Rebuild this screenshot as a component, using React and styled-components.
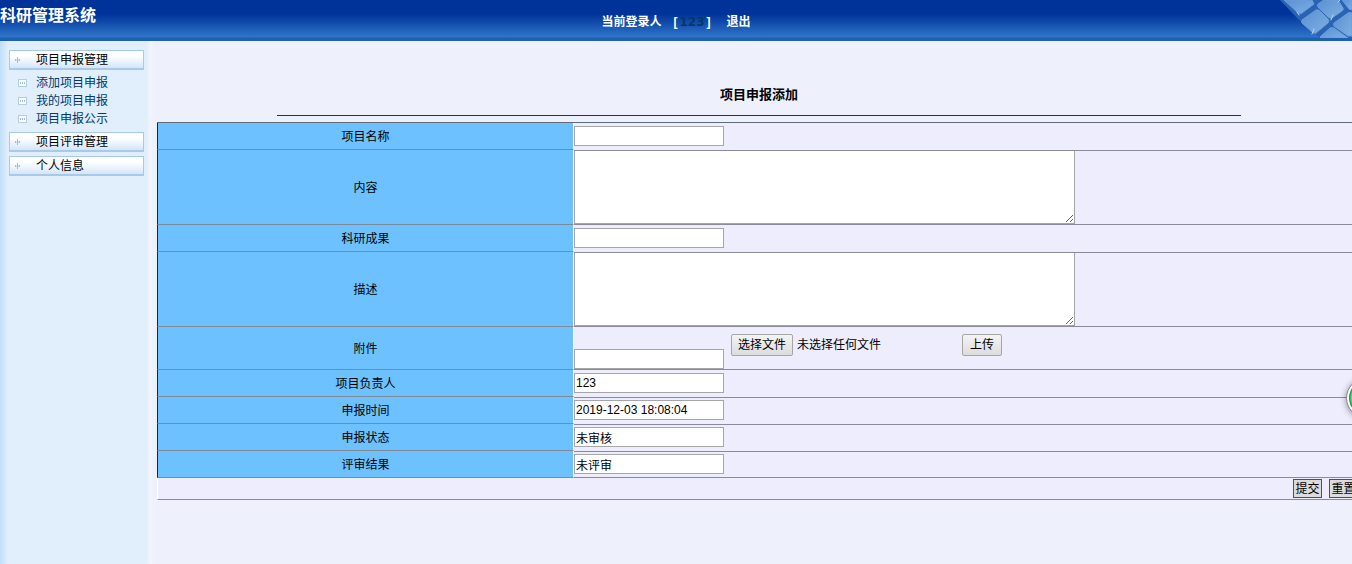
import React, { useState } from "react";
import styled, { createGlobalStyle } from "styled-components";

const GlobalStyle = createGlobalStyle`
  * {
    box-sizing: border-box;
  }
  html, body, #root {
    height: 100%;
  }
  body {
    margin: 0;
    overflow: hidden;
    font: 12px/18px "Liberation Sans", "Noto Sans CJK SC", sans-serif;
    color: #000;
    background: #eef1fc;
  }
  input, textarea, button {
    font: inherit;
    color: inherit;
    margin: 0;
    border-radius: 0;
  }
`;

const Page = styled.div`
  display: flex;
  flex-direction: column;
  min-height: 100%;
`;

const Header = styled.header`
  display: grid;
  grid-template-columns: 1fr auto 1fr;
  height: 41px;
  color: #fff;
  font-weight: bold;
  background: linear-gradient(#003399 0, #003399 14px, #2f75c9 37px, #1d5fb2 38px);
`;

const SystemName = styled.h1`
  margin: 0;
  padding-top: 4px;
  font-size: 16px;
  line-height: 24px;
`;

const LoginInfo = styled.div`
  display: flex;
  padding-top: 13px;
`;

const UserName = styled.span`
  padding: 0 2px;
  color: #04386b;
  font-family: "DejaVu Sans", sans-serif;
`;

const Logout = styled.a`
  margin-left: 16px;
  color: #fff;
  text-decoration: none;
`;

const Keys = styled.svg`
  justify-self: end;
  width: 72px;
  height: 38px;
`;

const Body = styled.div`
  display: flex;
  flex: 1;
`;

const Sidebar = styled.nav`
  flex: none;
  width: 153px;
  padding: 9px 9px 0;
  background: linear-gradient(90deg, #bfe0f8 0, #e1eefb 8px, #e1eefb 146px, #f2f7fe 151px, #eef1fc 153px);
`;

const MenuHead = styled.button`
  display: flex;
  align-items: center;
  width: 135px;
  height: 20px;
  margin-bottom: 4px;
  padding: 0 0 0 4px;
  border: 1px solid #a9c9ea;
  border-bottom-width: 2px;
  background: linear-gradient(#fff 30%, #d3e5f8);
  cursor: pointer;
  svg {
    margin-right: 14px;
  }
`;

const MenuList = styled.ul`
  margin: 0 0 4px;
  padding: 0;
  list-style: none;
`;

const MenuLink = styled.a`
  display: flex;
  align-items: center;
  padding-left: 9px;
  color: #04386b;
  text-decoration: none;
  svg {
    margin-right: 9px;
  }
`;

const Main = styled.main`
  flex: 1;
  min-width: 0;
  margin: 0 -9px 0 4px;
`;

const Title = styled.h2`
  width: 80%;
  margin: 44px auto 6px;
  padding-bottom: 11px;
  border-bottom: 1px solid #850a20;
  font-size: 13px;
  line-height: 19px;
  text-align: center;
`;

const FormTable = styled.table`
  width: 100%;
  table-layout: fixed;
  border-spacing: 0;
  border-top: 1px solid #5f6b76;
`;

const LabelCell = styled.th`
  width: 417px;
  height: ${props => props.$height || 27}px;
  padding: 2px 0 0;
  font-weight: normal;
  background: #6cc1fe;
  border-left: 1px solid #222;
  border-right: 1px solid #fff;
  border-bottom: 1px solid #7f8a96;
`;

const FieldCell = styled.td`
  padding: ${props => (props.$tall ? 0 : props.$top ? 2 : 3)}px 0 0;
  vertical-align: top;
  background: #eeedfe;
  border-top: ${props => (props.$top ? "1px solid #8a8a9a" : "0")};
  border-bottom: ${props => (props.$bottom ? "1px solid #8a8a9a" : "0")};
`;

const TextInput = styled.input`
  display: block;
  width: 150px;
  height: 20px;
  padding: 0 1px;
  border: 1px solid #a6a6a6;
  background: #fff;
`;

const TextArea = styled.textarea`
  display: block;
  width: 501px;
  height: 73px;
  padding: 2px;
  border: 1px solid #a6a6a6;
  border-top: 0;
  background: #fff;
`;

const FileRow = styled.div`
  display: flex;
  align-items: flex-end;
  height: 42px;
`;

const FileBar = styled.div`
  display: flex;
  align-items: center;
  align-self: flex-start;
  padding: 7px 0 0 7px;
`;

const buttonFace = `
  height: 22px;
  padding: 1px 6px 0;
  border: 1px solid #a6a6a6;
  border-radius: 2px;
  background: linear-gradient(#f4f4f4, #dcdcdc);
  cursor: pointer;
`;

const FileLabel = styled.label`
  ${buttonFace}
  margin-right: 4px;
`;

const HiddenFile = styled.input`
  display: none;
`;

const FileName = styled.span`
  width: 165px;
`;

const UploadButton = styled.button`
  ${buttonFace}
  && {
    border-radius: 2px;
    padding: 0 7px;
  }
`;

const FooterCell = styled.td`
  height: 22px;
  padding: 0 3px 1px 0;
  text-align: right;
  background: #eeedfe;
  border-left: 1px solid #fff;
  border-bottom: 1px solid #8a8a9a;
`;

const Actions = styled.div`
  display: flex;
  justify-content: flex-end;
  gap: 7px;
`;

const FormButton = styled.button`
  width: 29px;
  height: 19px;
  padding: 1px 0 0;
  border: 1px solid #2b5797;
  background: #dcdcdc;
  line-height: 17px;
  cursor: pointer;
`;

const FloatBall = styled.button`
  position: fixed;
  top: 379px;
  right: -33px;
  width: 38px;
  height: 38px;
  padding: 0;
  border: 2px solid #fff;
  && {
    border-radius: 50%;
  }
  outline: 1px solid #8b8b90;
  background: radial-gradient(#5ee07d 60%, #1c9c48 68%);
  box-shadow: 0 1px 6px 1px rgba(0, 0, 0, 0.4);
`;

function HeadIcon() {
  return (
    <svg width="8" height="8" viewBox="0 0 8 8" fill="#9dbedd">
      <path d="M3 1h1v6H3zM1 3h1v2H1zM5 3h1v2H5z" />
      <path d="M2 3h1v2H2zM4 3h1v2H4z" opacity=".4" />
    </svg>
  );
}

function ItemIcon() {
  return (
    <svg width="9" height="8" viewBox="0 0 9 8">
      <rect x=".5" y=".5" width="8" height="7" fill="#fff" stroke="#b3cfe8" />
      <path d="M2 3h1v2H2zM4 3h1v2H4zM6 3h1v2H6z" fill="#9dbedd" />
    </svg>
  );
}

function KeysArt() {
  return (
    <Keys viewBox="0 0 72 38">
      <defs>
        <linearGradient id="key" x1="0" y1="0" x2="1" y2="1">
          <stop offset="0" stopColor="#5a90d2" />
          <stop offset="1" stopColor="#7fb0e2" />
        </linearGradient>
      </defs>
      <path d="M0 0H72V38H40L17 18Z" fill="#2a62b4" />
      <g fill="url(#key)" stroke="#6a9cd8">
        <path d="M4 0H32L34 4L22 13Q20 15 17 12Z" />
        <path d="M22 20L36 10Q38 9 40 11L48 19Q50 21 48 23L36 33Q34 34 32 32L22 23Q21 21 22 20Z" />
        <path d="M38 4L44 0H58L63 8Q64 10 62 11L52 18Q50 19 48 17L38 7Q37 5 38 4Z" />
        <path d="M54 23L68 13Q70 12 72 13V36L68 36L54 26Q53 24 54 23Z" />
        <path d="M40 37L50 28Q52 27 54 28L68 38H41Z" />
        <path d="M62 0H72V10L69 9Z" />
      </g>
      <g fill="none" stroke="#b9d6f3" strokeLinecap="round">
        <path d="M19 15L17 12M32 34L34 29M51 20L53 15M58 2L60 0" />
      </g>
    </Keys>
  );
}

const menus = [
  { name: "项目申报管理", items: ["添加项目申报", "我的项目申报", "项目申报公示"] },
  { name: "项目评审管理", items: [] },
  { name: "个人信息", items: [] },
];

// top / bottom: which edges of the field cell carry a line
const fields = [
  { id: "name", label: "项目名称" },
  { id: "content", label: "内容", type: "area", height: 75, top: true, bottom: true },
  { id: "result", label: "科研成果" },
  { id: "desc", label: "描述", type: "area", height: 75, top: true, bottom: true },
  { id: "file", label: "附件", type: "file", height: 43, bottom: true },
  { id: "owner", label: "项目负责人", value: "123" },
  { id: "time", label: "申报时间", value: "2019-12-03 18:08:04", top: true },
  { id: "status", label: "申报状态", value: "未审核", top: true },
  { id: "review", label: "评审结果", value: "未评审", top: true, bottom: true },
];

function FileField({ id }) {
  const [fileName, setFileName] = useState("");

  const handleChange = (e) => {
    setFileName(e.target.files[0] ? e.target.files[0].name : "");
  };

  return (
    <FileRow>
      <TextInput id={id} />
      <FileBar>
        <FileLabel htmlFor="picker">选择文件</FileLabel>
        <HiddenFile id="picker" type="file" onChange={handleChange} />
        <FileName>{fileName || "未选择任何文件"}</FileName>
        <UploadButton type="button">上传</UploadButton>
      </FileBar>
    </FileRow>
  );
}

function Field({ field }) {
  if (field.type === "area") return <TextArea id={field.id} />;
  if (field.type === "file") return <FileField id={field.id} />;
  return <TextInput id={field.id} defaultValue={field.value} />;
}

export default function App() {
  return (
    <>
      <GlobalStyle />
      <Page>
        <Header>
          <SystemName>科研管理系统</SystemName>
          <LoginInfo>
            <span>当前登录人　[</span>
            <UserName>123</UserName>
            <span>]</span>
            <Logout href="#logout">退出</Logout>
          </LoginInfo>
          <KeysArt />
        </Header>
        <Body>
          <Sidebar>
            {menus.map((menu) => (
              <React.Fragment key={menu.name}>
                <MenuHead type="button">
                  <HeadIcon />
                  {menu.name}
                </MenuHead>
                {menu.items.length > 0 && (
                  <MenuList>
                    {menu.items.map((item) => (
                      <li key={item}>
                        <MenuLink href="#item">
                          <ItemIcon />
                          {item}
                        </MenuLink>
                      </li>
                    ))}
                  </MenuList>
                )}
              </React.Fragment>
            ))}
          </Sidebar>
          <Main>
            <Title>项目申报添加</Title>
            <form onSubmit={(e) => e.preventDefault()}>
              <FormTable>
                <tbody>
                  {fields.map((field) => (
                    <tr key={field.id}>
                      <LabelCell scope="row" $height={field.height}>
                        <label htmlFor={field.id}>{field.label}</label>
                      </LabelCell>
                      <FieldCell $tall={!!field.height} $top={field.top} $bottom={field.bottom}>
                        <Field field={field} />
                      </FieldCell>
                    </tr>
                  ))}
                  <tr>
                    <FooterCell colSpan={2}>
                      <Actions>
                        <FormButton type="submit">提交</FormButton>
                        <FormButton type="reset">重置</FormButton>
                      </Actions>
                    </FooterCell>
                  </tr>
                </tbody>
              </FormTable>
            </form>
          </Main>
        </Body>
      </Page>
      <FloatBall type="button" aria-label="加速球" />
    </>
  );
}
